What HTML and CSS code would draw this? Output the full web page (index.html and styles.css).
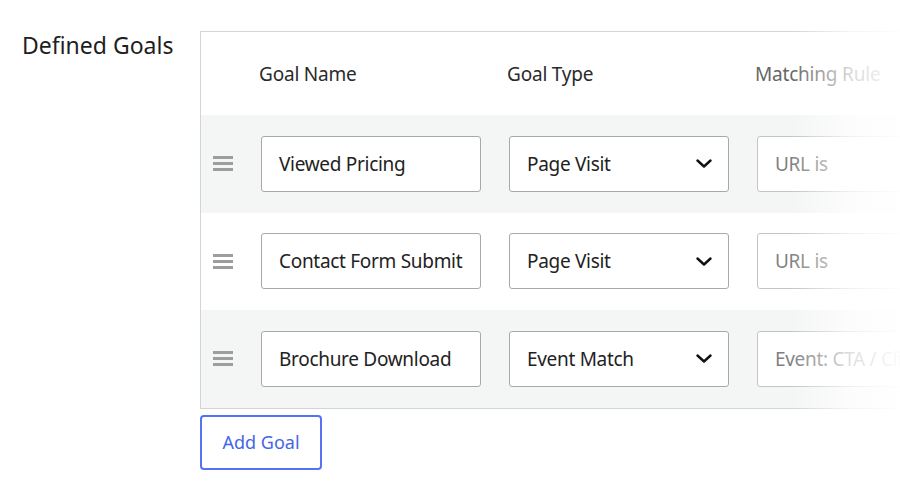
FILE: index.html
```html
<!DOCTYPE html>
<html lang="en">
<head>
<meta charset="utf-8">
<title>Defined Goals</title>
<link rel="stylesheet" href="styles.css">
</head>
<body>
<div class="page">
  <div class="label">Defined Goals</div>
  <div class="main">
    <div class="table">
      <div class="row head">
        <span></span>
        <div class="th">Goal Name</div>
        <div class="th">Goal Type</div>
        <div class="th muted">Matching Rule</div>
      </div>
      <div class="row body alt">
        <span class="handle"><i></i><i></i><i></i></span>
        <div class="field">Viewed Pricing</div>
        <div class="field select">Page Visit<svg class="chev" viewBox="0 0 16 9"><path d="M1.5 1.5 8 7.5 14.5 1.5"/></svg></div>
        <div class="field ph">URL is</div>
      </div>
      <div class="row body">
        <span class="handle"><i></i><i></i><i></i></span>
        <div class="field">Contact Form Submit</div>
        <div class="field select">Page Visit<svg class="chev" viewBox="0 0 16 9"><path d="M1.5 1.5 8 7.5 14.5 1.5"/></svg></div>
        <div class="field ph">URL is</div>
      </div>
      <div class="row body alt">
        <span class="handle"><i></i><i></i><i></i></span>
        <div class="field">Brochure Download</div>
        <div class="field select">Event Match<svg class="chev" viewBox="0 0 16 9"><path d="M1.5 1.5 8 7.5 14.5 1.5"/></svg></div>
        <div class="field ph">Event: CTA / Click</div>
      </div>
    </div>
    <button class="add">Add Goal</button>
  </div>
</div>
<div class="fade"></div>
</body>
</html>
```

FILE: styles.css
```css
html, body {
  margin: 0;
  padding: 0;
  background: #fff;
  overflow: hidden;
  width: 900px;
  height: 494px;
}
body {
  font-family: "Noto Sans", "Open Sans", sans-serif;
  color: #222;
}
.page {
  display: flex;
  padding-top: 31px;
}
.label {
  width: 178px;
  padding-left: 22px;
  flex: none;
  font-size: 23px;
  line-height: 30px;
  margin-top: -1px;
  color: #1e1e1e;
}
.main {
  flex: none;
  width: 800px;
}
.table {
  border: 1px solid #d4d4d4;
  border-right: none;
}
.row {
  display: grid;
  grid-template-columns: 20px 220px 220px 220px;
  column-gap: 28px;
  padding-left: 12px;
  align-items: center;
}
.head {
  height: 83px;
}
.th {
  font-size: 19px;
  letter-spacing: -0.2px;
  color: #2a2a2a;
  margin-left: -2px;
}
.th.muted {
  color: #666;
}
.body {
  padding-top: 20.75px;
  padding-bottom: 20.75px;
}
.alt {
  background: #f4f5f5;
}
.handle {
  display: flex;
  flex-direction: column;
  gap: 3px;
  width: 20px;
}
.handle i {
  display: block;
  height: 3px;
  background: #9d9d9d;
}
.field {
  height: 56px;
  box-sizing: border-box;
  border: 1px solid #a9a9a9;
  border-radius: 3px;
  background: #fff;
  display: flex;
  align-items: center;
  padding-left: 17px;
  font-size: 19px;
  letter-spacing: -0.3px;
  color: #222;
  white-space: nowrap;
  overflow: hidden;
}
.select {
  justify-content: space-between;
  padding-right: 16px;
}
.chev {
  width: 16px;
  height: 9px;
  fill: none;
  stroke: #111;
  stroke-width: 2.4;
  stroke-linecap: round;
  stroke-linejoin: round;
}
.ph {
  color: #808080;
  border-color: #c4c4c4;
}
.add {
  margin-top: 6px;
  width: 122px;
  height: 55px;
  border: 2px solid #5572f2;
  border-radius: 4px;
  background: #fff;
  color: #4566e8;
  font-family: "Noto Sans", "Open Sans", sans-serif;
  font-size: 18px;
  padding: 0;
}
.fade {
  position: absolute;
  top: 0;
  left: 790px;
  width: 110px;
  height: 494px;
  background: linear-gradient(to right, rgba(255,255,255,0) 0%, rgba(255,255,255,0.75) 55%, rgba(255,255,255,0.97) 100%);
  pointer-events: none;
}
```
